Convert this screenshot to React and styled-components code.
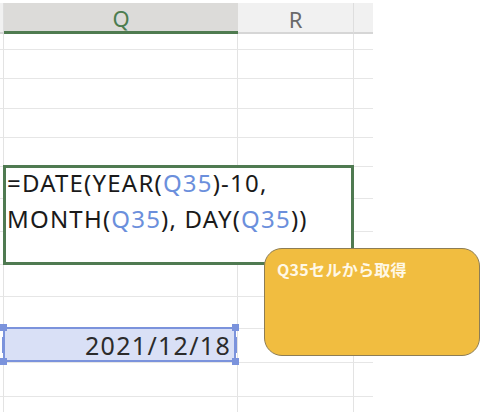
import React from "react";
import styled, { createGlobalStyle } from "styled-components";

const GlobalStyle = createGlobalStyle`
  html, body {
    margin: 0;
    padding: 0;
    background: #ffffff;
  }
  body {
    font-family: "Noto Sans", "Noto Sans CJK JP", sans-serif;
  }
`;

const Canvas = styled.div`
  position: relative;
  width: 500px;
  height: 412px;
  overflow: hidden;
  background: #ffffff;
  padding-top: 3px;
  box-sizing: border-box;
`;

const Sheet = styled.div`
  display: flex;
  flex-direction: column;
  width: 373px;
`;

const HeaderRow = styled.div`
  display: flex;
  height: 31px;
`;

const HeaderCell = styled.div`
  display: flex;
  align-items: center;
  justify-content: center;
  box-sizing: border-box;
  width: ${(p) => p.$w}px;
  background: ${(p) => (p.$active ? "#dcdbd9" : "#f1f1f1")};
  color: ${(p) => (p.$active ? "#4c7d4f" : "#6a6a6a")};
  border-right: ${(p) => (p.$edge ? "1px solid #dedede" : "none")};
  border-bottom: ${(p) => (p.$active ? "3px solid #4f7b50" : "2px solid #d6d6d6")};
  font-size: 22px;
  padding-top: 2px;
`;

const Row = styled.div`
  display: flex;
  height: ${(p) => p.$h}px;
`;

const Cell = styled.div`
  box-sizing: border-box;
  width: ${(p) => p.$w}px;
  border-right: ${(p) => (p.$edge ? "1px solid #e3e3e3" : "none")};
  border-bottom: 1px solid #e6e6e6;
`;

const FormulaBox = styled.div`
  position: absolute;
  left: 3px;
  top: 165px;
  width: 351px;
  height: 100px;
  box-sizing: border-box;
  border: 3px solid #4f7a51;
  background: #ffffff;
  padding: 0 0 0 1px;
  overflow: hidden;
`;

const FormulaText = styled.div`
  margin-top: -3px;
  font-size: 24px;
  letter-spacing: 1.2px;
  line-height: 36px;
  color: #1a1a1a;
  white-space: nowrap;
`;

const Ref = styled.span`
  color: #6b8fdc;
`;

const Callout = styled.div`
  position: absolute;
  left: 264px;
  top: 248px;
  width: 216px;
  height: 108px;
  box-sizing: border-box;
  border: 1.5px solid #8d7d55;
  border-radius: 18px;
  background: #f1bd40;
  padding: 10px 12px;
  color: #fff8e6;
  font-family: "Noto Sans CJK JP", sans-serif;
  font-weight: 700;
  font-size: 16px;
  letter-spacing: 0.3px;
  line-height: 20px;
`;

const Selection = styled.div`
  position: absolute;
  left: 3px;
  top: 327px;
  width: 233px;
  height: 35px;
  box-sizing: border-box;
  border: 2px solid #7b93dc;
  background: #d9e0f6;
  display: flex;
  align-items: center;
  justify-content: flex-end;
  padding-right: 3px;
  font-size: 25px;
  letter-spacing: 1.3px;
  color: #2b2b2b;
`;

const Handle = styled.span`
  position: absolute;
  width: 7px;
  height: 7px;
  background: #7b93dc;
  ${(p) => (p.$x === "l" ? "left: -5px;" : "right: -5px;")}
  ${(p) => (p.$y === "t" ? "top: -5px;" : "bottom: -5px;")}
`;

const SideBar = styled.span`
  position: absolute;
  top: 8px;
  width: 3px;
  height: 16px;
  background: #7b93dc;
  ${(p) => (p.$x === "l" ? "left: -3px;" : "right: -3px;")}
`;

const columns = [
  { w: 4, edge: true },
  { w: 234, edge: true },
  { w: 116, edge: true },
  { w: 19, edge: false },
];

const rowHeights = [16, 29, 30, 29, 29, 32, 33, 33, 32, 32, 34, 34, 20];

function App() {
  return (
    <>
      <GlobalStyle />
      <Canvas>
        <Sheet>
          <HeaderRow>
            <HeaderCell $w={4} $edge />
            <HeaderCell $w={234} $active>Q</HeaderCell>
            <HeaderCell $w={116} $edge>R</HeaderCell>
            <HeaderCell $w={19} />
          </HeaderRow>
          {rowHeights.map((h, i) => (
            <Row key={i} $h={h}>
              {columns.map((c, j) => (
                <Cell key={j} $w={c.w} $edge={c.edge} />
              ))}
            </Row>
          ))}
        </Sheet>

        <FormulaBox>
          <FormulaText>
            =DATE(YEAR(<Ref>Q35</Ref>)-10,
            <br />
            MONTH(<Ref>Q35</Ref>), DAY(<Ref>Q35</Ref>))
          </FormulaText>
        </FormulaBox>

        <Callout>Q35セルから取得</Callout>

        <Selection>
          2021/12/18
          <Handle $x="l" $y="t" />
          <Handle $x="r" $y="t" />
          <Handle $x="l" $y="b" />
          <Handle $x="r" $y="b" />
          <SideBar $x="l" />
          <SideBar $x="r" />
        </Selection>
      </Canvas>
    </>
  );
}

export default App;
